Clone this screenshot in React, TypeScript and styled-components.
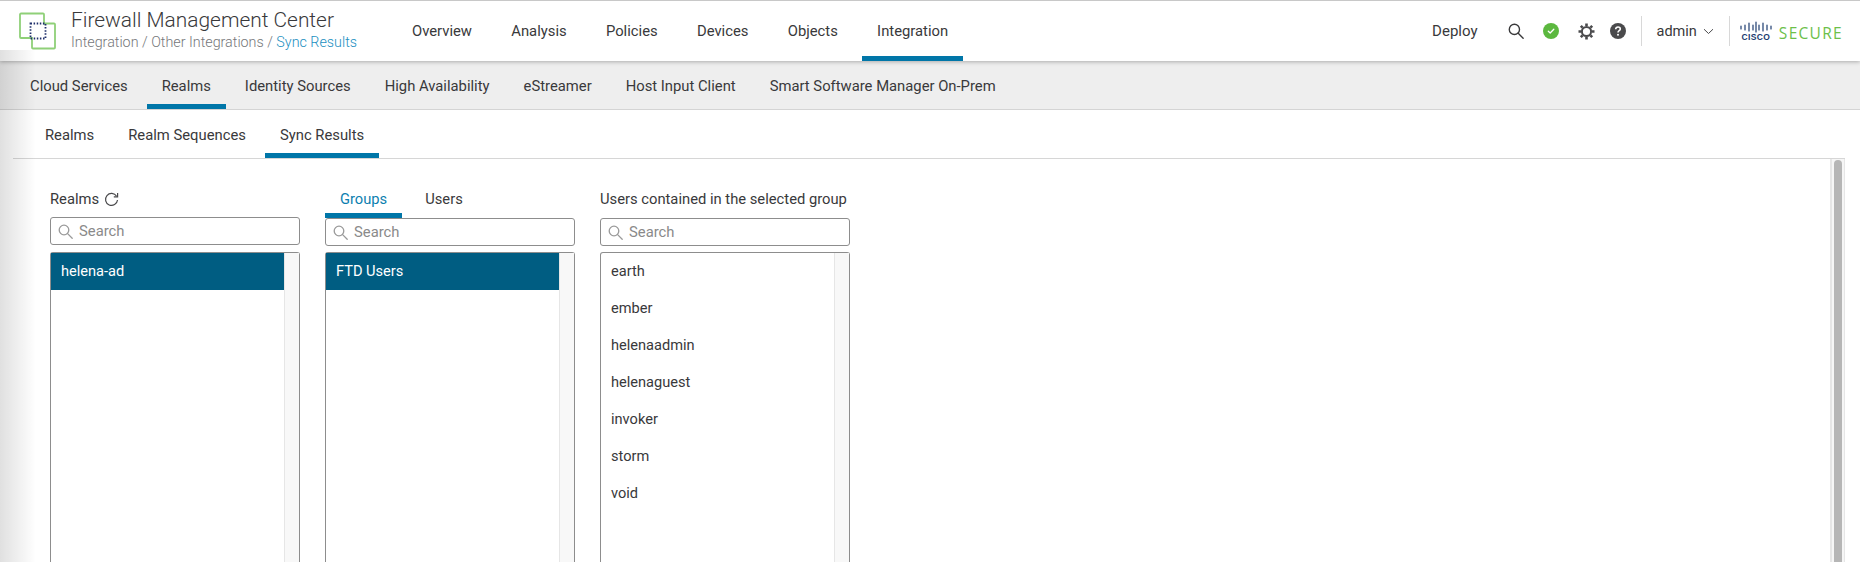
import React from "react";
import styled, { createGlobalStyle } from "styled-components";

const Global = createGlobalStyle`
  html, body { margin: 0; padding: 0; height: 562px; overflow: hidden; background: #fff; }
  body { font-family: Roboto, "Liberation Sans", sans-serif; color: #39393b; }
  #root { height: 562px; }
`;

const Page = styled.div`
  position: relative;
  height: 562px;
  display: flex;
  flex-direction: column;
  overflow: hidden;
`;
const EdgeShade = styled.div`
  position: absolute;
  left: 0;
  top: 50px;
  bottom: 0;
  width: 36px;
  pointer-events: none;
  z-index: 3;
  background: linear-gradient(90deg, rgba(0, 0, 0, 0.12), rgba(0, 0, 0, 0));
`;
const Header = styled.header`
  position: relative;
  z-index: 2;
  height: 61px;
  flex: none;
  display: flex;
  align-items: stretch;
  border-top: 1px solid #c8c8c8;
  box-sizing: border-box;
  background: #fff;
  box-shadow: 0 1px 4px rgba(0, 0, 0, 0.28);
`;
const Brand = styled.div`
  display: flex;
  align-items: flex-start;
  padding: 11px 0 0 18px;
  width: 397px;
  box-sizing: border-box;
  flex: none;
`;
const BrandText = styled.div`
  margin-left: 15px;
  margin-top: -5px;
`;
const Title = styled.div`
  font-size: 20.9px;
  line-height: 26px;
  font-weight: 300;
  color: #39393b;
`;
const Crumbs = styled.div`
  font-size: 14.3px;
  line-height: 18px;
  font-weight: 300;
  color: #75777a;
`;
const CrumbActive = styled.span`
  color: #1b8fbf;
`;
const MainNav = styled.nav`
  display: flex;
  align-items: stretch;
`;
const MainItem = styled.div<{ $active?: boolean }>`
  display: flex;
  align-items: center;
  box-sizing: border-box;
  height: 60px;
  padding: 0 15px 1px;
  margin-right: ${(p) => (p.$active ? 0 : 9.3)}px;
  font-size: 14.8px;
  color: #39393b;
  border-bottom: 5px solid ${(p) => (p.$active ? "#0076a8" : "transparent")};
  border-top: 5px solid transparent;
`;
const HeaderRight = styled.div`
  margin-left: auto;
  display: flex;
  align-items: center;
  padding-right: 17px;
`;
const Deploy = styled.span`
  font-size: 15px;
  margin-right: 30px;
`;
const IconSlot = styled.span<{ $w: number }>`
  display: flex;
  justify-content: center;
  align-items: center;
  width: ${(p) => p.$w}px;
`;
const Divider = styled.span`
  width: 1px;
  height: 30px;
  background: #d8d8d8;
  flex: none;
`;
const Admin = styled.span`
  display: flex;
  align-items: center;
  font-size: 14.5px;
  padding: 0 15px 0 15px;
  gap: 6px;
`;
const CiscoWrap = styled.span`
  display: flex;
  flex-direction: column;
  align-items: center;
  margin-left: 10px;
  width: 32px;
`;
const CiscoWord = styled.span`
  font-family: "Liberation Sans", sans-serif;
  font-size: 8.5px;
  line-height: 9px;
  font-weight: 700;
  letter-spacing: 0.4px;
  color: #1b3b6f;
`;
const Secure = styled.span`
  margin-left: 7px;
  margin-top: 4px;
  font-family: "Open Sans", sans-serif;
  font-size: 15.5px;
  letter-spacing: 1.3px;
  color: #6cc04a;
`;
const SubNav = styled.nav`
  height: 48px;
  flex: none;
  display: flex;
  gap: 4px;
  padding-left: 15px;
  background: #eeeeee;
  border-bottom: 1px solid #d4d4d4;
`;
const SubItem = styled.div<{ $active?: boolean }>`
  display: flex;
  align-items: center;
  padding: 7px 15px 0;
  font-size: 14.8px;
  box-sizing: border-box;
  height: 48px;
  border-bottom: 5px solid ${(p) => (p.$active ? "#0076a8" : "transparent")};
`;
const Tabs = styled.div`
  height: 49px;
  flex: none;
  display: flex;
  gap: 4px;
  margin: 0 15px 0 13px;
  padding-left: 17px;
  border-bottom: 1px solid #d6d6d6;
  box-sizing: border-box;
`;
const TabItem = styled(SubItem)`
  height: 48px;
  padding: 7px 15px 0;
`;
const Body = styled.div`
  flex: 1;
  min-height: 0;
  display: flex;
  padding-left: 50px;
  position: relative;
`;
const Columns = styled.div`
  display: grid;
  grid-template-columns: 250px 250px 250px;
  column-gap: 25px;
  flex: none;
  height: 100%;
`;
const Column = styled.div`
  display: flex;
  flex-direction: column;
  height: 100%;
  min-height: 0;
`;
const Caption = styled.div<{ $h: number }>`
  height: ${(p) => p.$h}px;
  padding-top: 30px;
  box-sizing: border-box;
  display: flex;
  align-items: flex-start;
  gap: 5px;
  font-size: 14.75px;
  line-height: 20px;
  flex: none;
`;
const ColTabs = styled.div`
  height: 59px;
  flex: none;
  display: flex;
  align-items: flex-end;
`;
const ColTab = styled.div<{ $active?: boolean }>`
  box-sizing: border-box;
  width: ${(p) => (p.$active ? 77 : 84)}px;
  height: 30px;
  display: flex;
  justify-content: center;
  padding-top: 1px;
  font-size: 14.7px;
  line-height: 20px;
  color: ${(p) => (p.$active ? "#0d7fb0" : "#39393b")};
  border-bottom: 5px solid ${(p) => (p.$active ? "#0076a8" : "transparent")};
`;
const SearchBox = styled.div`
  flex: none;
  box-sizing: border-box;
  height: 28px;
  display: flex;
  align-items: center;
  gap: 6px;
  padding-left: 7px;
  border: 1px solid #8d8d8d;
  border-radius: 3px;
  font-size: 14.8px;
  color: #8a8a8a;
`;
const ListBox = styled.div<{ $gap: number }>`
  margin-top: ${(p) => p.$gap}px;
  flex: 1;
  min-height: 0;
  display: flex;
  border: 1px solid #8d8d8d;
  border-bottom: none;
  border-radius: 3px 3px 0 0;
`;
const Rows = styled.div`
  flex: 1;
`;
const Row = styled.div<{ $selected?: boolean }>`
  height: 37px;
  box-sizing: border-box;
  padding-bottom: 2px;
  display: flex;
  align-items: center;
  padding-left: 10px;
  font-size: 14.6px;
  color: ${(p) => (p.$selected ? "#fff" : "#39393b")};
  background: ${(p) => (p.$selected ? "#005d82" : "transparent")};
`;
const ListScroll = styled.div`
  width: 15px;
  flex: none;
  background: #f8f8f8;
  border-left: 1px solid #e6e6e6;
  box-sizing: border-box;
`;
const PageScroll = styled.div`
  position: absolute;
  right: 15px;
  top: 0;
  bottom: 0;
  width: 15px;
  box-sizing: border-box;
  background: #f6f6f6;
  border-left: 2px solid #e6e6e6;
  border-right: 1px solid #e6e6e6;
  padding: 1px 2px 0 2px;
`;
const PageThumb = styled.div`
  height: 100%;
  background: #b6b6b6;
  border-radius: 4px 4px 0 0;
`;

const SearchGlyph = ({ size = 15, color = "#9a9a9a", sw = 1.3 }: { size?: number; color?: string; sw?: number }) => (
  <svg width={size} height={size} viewBox="0 0 15 15" fill="none" stroke={color} strokeWidth={sw}>
    <circle cx="6" cy="6" r="4.8" />
    <path d="M9.6 9.6 14.2 14.2" strokeLinecap="round" />
  </svg>
);

const Logo = () => (
  <svg width="38" height="38" viewBox="0 0 38 38" fill="none" style={{ flex: "none" }}>
    <path
      d="M2 2.5a1 1 0 0 1 1-1h22a1 1 0 0 1 1 1v9h10a1 1 0 0 1 1 1v23a1 1 0 0 1-1 1H15a1 1 0 0 1-1-1v-9.500H3a1 1 0 0 1-1-1z"
      stroke="#8fd078"
      strokeWidth="1.8"
    />
    <rect x="12.500" y="11.500" width="15" height="15" stroke="#1f2f6b" strokeWidth="1.8" strokeDasharray="1.5 1.6" />
  </svg>
);

const Check = () => (
  <svg width="16" height="16" viewBox="0 0 16 16">
    <circle cx="8" cy="8" r="8" fill="#5cb83f" />
    <path d="M5.300 8.200 7.200 10 10.800 6.300" fill="none" stroke="#fff" strokeWidth="1.300" strokeLinecap="round" strokeLinejoin="round" />
  </svg>
);

const Gear = () => (
  <svg width="17" height="17" viewBox="0 0 17 17" fill="none" stroke="#4a4a4c">
    <circle cx="8.500" cy="8.500" r="4.600" strokeWidth="2" />
    <g strokeWidth="2.600">
      <path d="M8.500 0.500V3M8.500 14V16.500M0.500 8.500H3M14 8.500H16.500" />
      <path d="M2.800 2.800 4.600 4.600M12.400 12.400 14.200 14.200M14.200 2.800 12.400 4.600M4.600 12.400 2.800 14.200" />
    </g>
  </svg>
);

const Help = () => (
  <svg width="16" height="16" viewBox="0 0 16 16">
    <circle cx="8" cy="8" r="8" fill="#4a4a4c" />
    <path d="M5.700 6.200c0-1.400 1-2.200 2.300-2.200s2.300.8 2.300 2c0 1.700-2.300 1.700-2.300 3.400" fill="none" stroke="#fff" strokeWidth="1.600" />
    <circle cx="8" cy="11.800" r="1" fill="#fff" />
  </svg>
);

const Chevron = () => (
  <svg width="11" height="7" viewBox="0 0 11 7" fill="none" stroke="#4a4a4c" strokeWidth="1">
    <path d="M1 1.200 5.500 5.500 10 1.200" />
  </svg>
);

const Refresh = () => (
  <svg width="15" height="15" viewBox="0 0 15 15" fill="none" stroke="#4a4a4c" strokeWidth="1.200" style={{ marginTop: 3 }}>
    <path d="M12.600 4.200A6 6 0 1 0 13.500 8" />
    <path d="M13.600 1v3.800H9.800" />
  </svg>
);

const CiscoBars = () => (
  <svg width="32" height="12" viewBox="0 0 32 12" stroke="#1b3b6f" strokeWidth="1.200" strokeLinecap="round">
    {[
      [1, 5, 8],
      [5, 4, 9],
      [9, 2, 10],
      [13, 4, 9],
      [16, 1, 11],
      [19, 4, 9],
      [23, 2, 10],
      [27, 4, 9],
      [31, 5, 8],
    ].map(([x, a, b]) => (
      <line key={x} x1={x} x2={x} y1={a} y2={b} />
    ))}
  </svg>
);

const Search = () => (
  <SearchBox>
    <SearchGlyph />
    <span>Search</span>
  </SearchBox>
);

const users = ["earth", "ember", "helenaadmin", "helenaguest", "invoker", "storm", "void"];

export default function App() {
  return (
    <Page>
      <Global />
      <EdgeShade />
      <Header>
        <Brand>
          <Logo />
          <BrandText>
            <Title>Firewall Management Center</Title>
            <Crumbs>
              Integration / Other Integrations / <CrumbActive>Sync Results</CrumbActive>
            </Crumbs>
          </BrandText>
        </Brand>
        <MainNav>
          <MainItem>Overview</MainItem>
          <MainItem>Analysis</MainItem>
          <MainItem>Policies</MainItem>
          <MainItem>Devices</MainItem>
          <MainItem>Objects</MainItem>
          <MainItem $active>Integration</MainItem>
        </MainNav>
        <HeaderRight>
          <Deploy>Deploy</Deploy>
          <IconSlot $w={16}>
            <SearchGlyph size={16} color="#39393b" sw={1.3} />
          </IconSlot>
          <IconSlot $w={54}>
            <Check />
          </IconSlot>
          <IconSlot $w={17}>
            <Gear />
          </IconSlot>
          <IconSlot $w={46}>
            <Help />
          </IconSlot>
          <Divider />
          <Admin>
            admin <Chevron />
          </Admin>
          <Divider />
          <CiscoWrap>
            <CiscoBars />
            <CiscoWord>CISCO</CiscoWord>
          </CiscoWrap>
          <Secure>SECURE</Secure>
        </HeaderRight>
      </Header>
      <SubNav>
        <SubItem>Cloud Services</SubItem>
        <SubItem $active>Realms</SubItem>
        <SubItem>Identity Sources</SubItem>
        <SubItem>High Availability</SubItem>
        <SubItem>eStreamer</SubItem>
        <SubItem>Host Input Client</SubItem>
        <SubItem>Smart Software Manager On-Prem</SubItem>
      </SubNav>
      <Tabs>
        <TabItem>Realms</TabItem>
        <TabItem>Realm Sequences</TabItem>
        <TabItem $active>Sync Results</TabItem>
      </Tabs>
      <Body>
        <Columns>
          <Column>
            <Caption $h={58}>
              Realms <Refresh />
            </Caption>
            <Search />
            <ListBox $gap={7}>
              <Rows>
                <Row $selected>helena-ad</Row>
              </Rows>
              <ListScroll />
            </ListBox>
          </Column>
          <Column>
            <ColTabs>
              <ColTab $active>Groups</ColTab>
              <ColTab>Users</ColTab>
            </ColTabs>
            <Search />
            <ListBox $gap={6}>
              <Rows>
                <Row $selected>FTD Users</Row>
              </Rows>
              <ListScroll />
            </ListBox>
          </Column>
          <Column>
            <Caption $h={59}>Users contained in the selected group</Caption>
            <Search />
            <ListBox $gap={6}>
              <Rows>
                {users.map((u) => (
                  <Row key={u}>{u}</Row>
                ))}
              </Rows>
              <ListScroll />
            </ListBox>
          </Column>
        </Columns>
        <PageScroll>
          <PageThumb />
        </PageScroll>
      </Body>
    </Page>
  );
}
